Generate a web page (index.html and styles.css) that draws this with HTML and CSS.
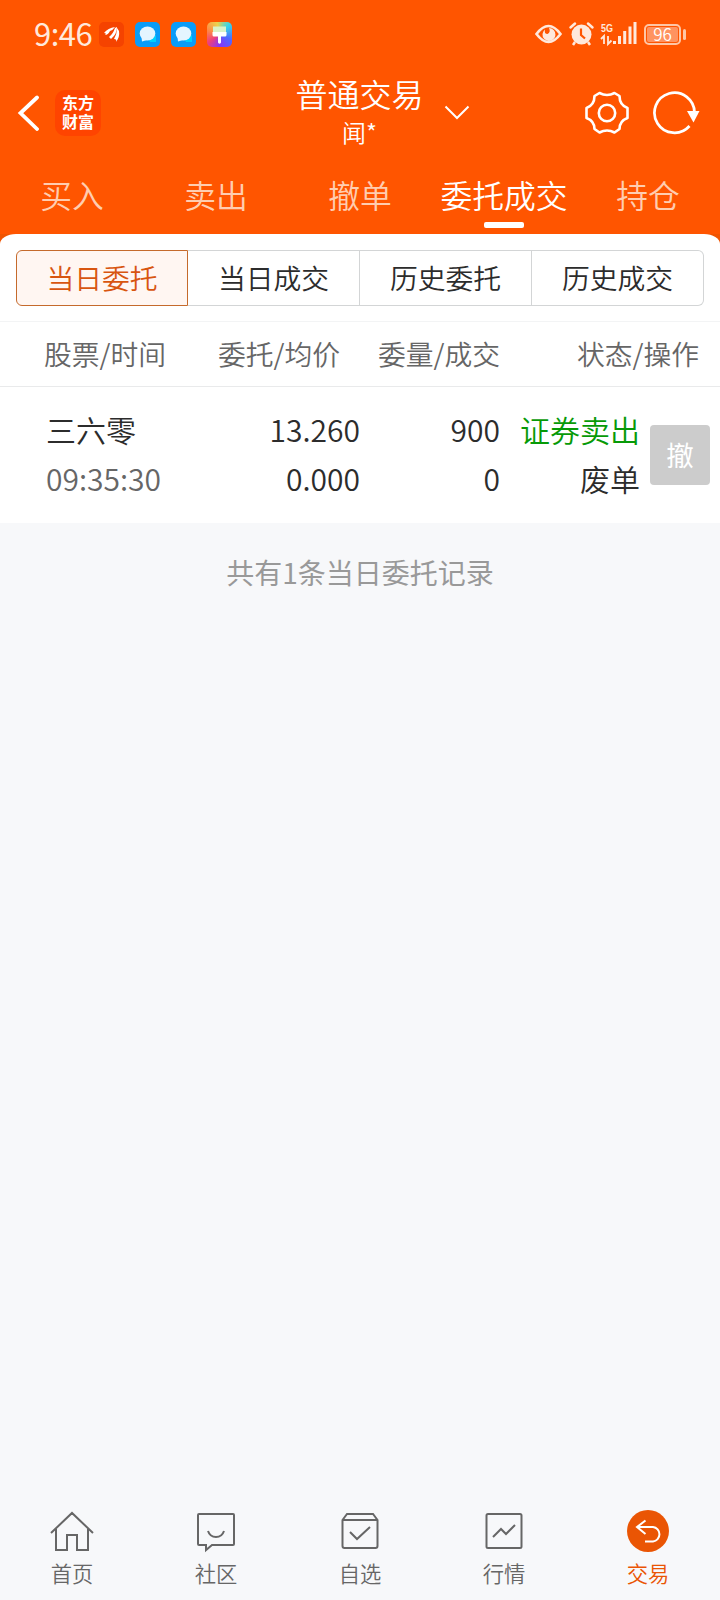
FILE: index.html
```html
<!DOCTYPE html>
<html lang="zh-CN">
<head>
  <meta charset="UTF-8">
  <meta name="viewport" content="width=device-width, initial-scale=1.0">
  <title>委托成交</title>
  <link rel="stylesheet" href="styles.css">
</head>
<body>
  <header class="top">
    <!-- 状态栏 -->
    <div class="status-bar">
      <span class="clock">9:46</span>
      <div class="notice-icons">
        <svg width="25" height="25" viewBox="0 0 25 25">
          <rect width="25" height="25" rx="5" fill="#f54300"/>
          <path d="M5 11Q9 6 16 5Q14 8 11 9Q9 13 6 13Q8 11 5 11Z" fill="#fff"/>
          <path d="M10 15Q14 12 16 6L18 5Q18 12 12 17Z" fill="#fff"/>
          <path d="M15 17Q18 12 18 6L20 9Q21 15 17 20Q18 17 15 17Z" fill="#fff"/>
        </svg>
        <svg width="25" height="25" viewBox="0 0 25 25">
          <rect width="25" height="25" rx="5" fill="#0a9cf8"/>
          <path d="M14 18L21 13V20H15Z" fill="#00d0ff"/>
          <ellipse cx="12.500" cy="11.500" rx="7.800" ry="7" fill="#e4f5ff"/>
          <path d="M6.500 15L7 19.500L12 18Z" fill="#e4f5ff"/>
        </svg>
        <svg width="25" height="25" viewBox="0 0 25 25">
          <rect width="25" height="25" rx="5" fill="#0a9cf8"/>
          <path d="M14 18L21 13V20H15Z" fill="#00d0ff"/>
          <ellipse cx="12.500" cy="11.500" rx="7.800" ry="7" fill="#e4f5ff"/>
          <path d="M6.500 15L7 19.500L12 18Z" fill="#e4f5ff"/>
        </svg>
        <div class="theme-icon">
          <svg width="25" height="25" viewBox="0 0 25 25">
            <rect x="6" y="4.500" width="13" height="6" fill="#d9f3c8"/>
            <path d="M5.500 10H19.500V13Q19.500 14.500 18 14.500H14V20.500Q12.500 23 11 20.500V14.500H7Q5.500 14.500 5.500 13Z" fill="#fff"/>
          </svg>
        </div>
      </div>
      <div class="system-icons">
        <svg width="106" height="26" viewBox="0 0 106 26" fill="#ffe9dc">
          <!-- 护眼 -->
          <path d="M1.500 13Q13.500-3 25.500 13Q13.500 29 1.500 13Z" fill="none" stroke="#ffe9dc" stroke-width="2.600"/>
          <path d="M14 7A6.500 6.500 0 1 1 7.500 13Q8 10 10 8.500Q9 13 12.500 13Q16 11 14 7Z"/>
          <!-- 闹钟 -->
          <circle cx="46.500" cy="13.500" r="10"/>
          <path d="M35.500 6.500L40 2.500M53 2.500L57.500 6.500" stroke="#ffe9dc" stroke-width="2.500" stroke-linecap="round"/>
          <path d="M40 21L38 24M53 21L55 24" stroke="#ffe9dc" stroke-width="2.500"/>
          <path d="M46 7.500V14L50 17.500" fill="none" stroke="#ff5500" stroke-width="2.200"/>
          <!-- 信号 -->
          <text class="net-type" x="66" y="11" textLength="12" lengthAdjust="spacingAndGlyphs">5G</text>
          <path d="M66 18L69 15V23M73 15V23L76.500 19.500" fill="none" stroke="#ffe9dc" stroke-width="1.800"/>
          <rect x="78" y="20" width="3" height="3"/>
          <rect x="83" y="15" width="3" height="8"/>
          <rect x="88.200" y="10" width="3" height="13"/>
          <rect x="93.500" y="5.500" width="3" height="17.500"/>
          <rect x="98.500" y="1" width="3" height="22"/>
        </svg>
        <div class="battery"><span>96</span></div>
        <i class="battery-cap"></i>
      </div>
    </div>

    <!-- 标题栏 -->
    <div class="title-bar">
      <div class="title-left">
        <svg width="22" height="36" viewBox="0 0 22 36">
          <path d="M20 2.500L3.500 18L20 34" fill="none" stroke="#fff" stroke-width="3.800" stroke-linecap="round"/>
        </svg>
        <div class="brand">东方<br>财富</div>
      </div>
      <div class="title-center">
        <div class="account">
          <h1>普通交易</h1>
          <p>闻*</p>
        </div>
        <svg class="arrow" width="26" height="15" viewBox="0 0 26 15">
          <path d="M1.500 1.500L13 13L24.500 1.500" fill="none" stroke="#fff" stroke-width="2"/>
        </svg>
      </div>
      <div class="title-right">
        <svg width="46" height="44" viewBox="0 0 46 44" fill="none" stroke="#fff" stroke-width="2.600" stroke-linejoin="round">
          <path d="M15.500 2Q23 6 30.500 2L35.500 5Q35.500 14 43.500 17V27Q35.500 30 35.500 38L30.500 41.500Q23 37.500 15.500 41.500L10.500 38Q10.500 30 2.500 27V17Q10.500 14 10.500 5Z"/>
          <circle cx="23" cy="22" r="8.200"/>
        </svg>
        <svg width="48" height="44" viewBox="0 0 48 44">
          <path d="M37.500 35A20 20 0 1 1 42.500 22" fill="none" stroke="#fff" stroke-width="2.700"/>
          <path d="M35 20H47.500L41.500 31.500Z" fill="#fff"/>
        </svg>
      </div>
    </div>

    <nav class="tabs">
      <a>买入</a>
      <a>卖出</a>
      <a>撤单</a>
      <a class="active">委托成交</a>
      <a>持仓</a>
    </nav>
  </header>

  <main>
    <section class="panel">
      <div class="segments">
        <button class="active">当日委托</button>
        <button>当日成交</button>
        <button>历史委托</button>
        <button>历史成交</button>
      </div>

      <div class="list-head">
        <span>股票/时间</span>
        <span>委托/均价</span>
        <span>委量/成交</span>
        <span>状态/操作</span>
      </div>

      <div class="order">
        <div class="cell name"><span>三六零</span><span class="time">09:35:30</span></div>
        <div class="cell"><span>13.260</span><span>0.000</span></div>
        <div class="cell"><span>900</span><span>0</span></div>
        <div class="cell"><span class="sell">证券卖出</span><span>废单</span></div>
        <button class="cancel">撤</button>
      </div>
    </section>
    <p class="total">共有1条当日委托记录</p>
  </main>

  <!-- 底部导航 -->
  <footer class="bottom-nav">
    <a>
      <svg width="46" height="44" viewBox="0 0 46 44">
        <path d="M2 23L23 3L44 23M7 19V40H18V25H28V40H39V19"/>
      </svg>
      <span>首页</span>
    </a>
    <a>
      <svg width="46" height="44" viewBox="0 0 46 44">
        <path d="M6 4H40Q41 4 41 5V34Q41 35 40 35H19L13 40V35H6Q5 35 5 34V5Q5 4 6 4Z"/>
        <path d="M15 21Q17 27 23 27Q29 27 31 21"/>
      </svg>
      <span>社区</span>
    </a>
    <a>
      <svg width="46" height="44" viewBox="0 0 46 44">
        <path d="M5.500 10L10 4H36L40.500 10V36Q40.500 38 38.500 38H7.500Q5.500 38 5.500 36ZM5.500 10H40.500"/>
        <path d="M13 22L20 29L33 17"/>
      </svg>
      <span>自选</span>
    </a>
    <a>
      <svg width="46" height="44" viewBox="0 0 46 44">
        <rect x="5.500" y="4" width="35" height="34" rx="1.500"/>
        <path d="M12 27L20 19L25 24L34 15"/>
      </svg>
      <span>行情</span>
    </a>
    <a class="active">
      <svg width="46" height="44" viewBox="0 0 46 44">
        <circle cx="23" cy="21" r="21"/>
        <path d="M20.500 10.500L12 17L20.500 24M12 17H28A7.300 7.300 0 0 1 28 31.500H20"/>
      </svg>
      <span>交易</span>
    </a>
  </footer>
</body>
</html>
```

FILE: styles.css
```css
* {
  box-sizing: border-box;
}
body {
  margin: 0;
  height: 1600px;
  display: flex;
  flex-direction: column;
  background: #f7f8fa;
  color: #2c2c2c;
  font-family: "Noto Sans CJK SC", sans-serif;
  font-weight: 350;
}
h1, p {
  margin: 0;
  font-weight: inherit;
}
svg {
  display: block;
}
button {
  font: inherit;
  color: inherit;
  padding: 0;
}

/* 顶部 */
.top {
  height: 234px;
  background: #ff5500;
  color: #fff;
}
.status-bar {
  height: 68px;
  padding: 0 35px 0 34px;
  display: flex;
  align-items: center;
}
.clock {
  width: 65px;
  padding-bottom: 2px;
  font-size: 31px;
  line-height: 40px;
  font-weight: 400;
  color: #ffe9dc;
  letter-spacing: -0.5px;
}
.notice-icons {
  display: flex;
  gap: 11px;
}
.theme-icon {
  border-radius: 5px;
  background: conic-gradient(from 45deg, #35d5e8, #4d69ff, #8a35f5 135deg, #f0407a 190deg, #ff8a45, #ecd34c, #35d5e8);
}
.system-icons {
  margin-left: auto;
  display: flex;
  align-items: center;
}
.net-type {
  font: bold 11px "Liberation Sans", sans-serif;
}
.battery {
  margin-left: 3px;
  width: 37px;
  height: 21px;
  padding: 1px;
  border: 2px solid #ffc6a5;
  border-radius: 5px;
}
.battery span {
  display: block;
  height: 15px;
  border-radius: 2px;
  background: #ff9360;
  font-size: 17px;
  line-height: 13px;
  text-align: center;
}
.battery-cap {
  width: 3px;
  height: 11px;
  margin-left: 2px;
  margin-right: -1px;
  border-radius: 2px;
  background: #ffc6a5;
}
.title-bar {
  height: 90px;
  padding: 0 20px 0 17px;
  display: grid;
  grid-template-columns: 1fr auto 1fr;
  align-items: center;
}
.title-left {
  display: flex;
  align-items: center;
  gap: 16px;
}
.brand {
  width: 46px;
  height: 46px;
  border-radius: 10px;
  background: #ff4400;
  font-size: 16px;
  font-weight: 700;
  line-height: 19px;
  padding-top: 3px;
  text-align: center;
}
.title-center {
  display: flex;
  align-items: center;
}
.account {
  text-align: center;
  margin-left: 48px;
  padding-bottom: 1px;
}
.account h1 {
  font-size: 32px;
  line-height: 38px;
}
.account p {
  font-size: 24px;
  line-height: 40px;
}
.arrow {
  margin-left: 20px;
  margin-top: -2px;
}
.title-right {
  display: flex;
  justify-content: flex-end;
  gap: 22px;
}
.tabs {
  height: 76px;
  display: flex;
}
.tabs a {
  flex: 1;
  display: flex;
  flex-direction: column;
  align-items: center;
  font-size: 31.800px;
  line-height: 46px;
  padding-top: 13px;
  white-space: nowrap;
  color: #ffcdb0;
}
.tabs .active {
  color: #fff;
}
.tabs .active::after {
  content: "";
  width: 40px;
  height: 6px;
  margin-top: 5px;
  border-radius: 2px;
  background: #fff;
}

/* 委托列表 */
main {
  flex: 1;
  background: linear-gradient(#f05400 10px, transparent 10px);
}
.panel {
  background: #fff;
  border-radius: 16px 16px 0 0 / 10px 10px 0 0;
  padding-top: 16px;
}
.segments {
  display: flex;
  margin: 0 16px 15px;
}
.segments button {
  width: 172px;
  height: 56px;
  padding-bottom: 2px;
  background: #fff;
  border: 1px solid #d3d5d6;
  font-size: 27.800px;
}
.segments button + button {
  border-left-width: 0;
}
.segments button:first-child {
  border-radius: 6px 0 0 6px;
}
.segments button:last-child {
  border-radius: 0 6px 6px 0;
}
.segments .active {
  color: #d85510;
  background: #fff6f2;
  border-color: #c56a2c;
}
.list-head {
  display: grid;
  grid-template-columns: 174px 166px 160px 1fr;
  height: 66px;
  padding: 0 21px 3px 0;
  align-items: center;
  text-align: right;
  border-top: 1px solid #f3f4f5;
  border-bottom: 1px solid #e9eaeb;
  font-size: 27.800px;
  color: #666;
}
.list-head span:first-child {
  padding-left: 44px;
  text-align: left;
  white-space: nowrap;
}
.order {
  display: grid;
  grid-template-columns: 134px 180px 140px 140px 60px;
  padding: 0 10px 0 46px;
  height: 136px;
  align-items: center;
  font-size: 30px;
}
.cell {
  display: flex;
  flex-direction: column;
  padding-bottom: 2px;
  text-align: right;
  line-height: 49px;
  white-space: nowrap;
}
.name {
  text-align: left;
}
.time {
  color: #666;
}
.sell {
  color: #079a07;
}
.cancel {
  width: 60px;
  height: 60px;
  margin-left: 10px;
  padding-bottom: 2px;
  border: 0;
  border-radius: 4px;
  background: #ccc;
  color: #fff;
  font-size: 27.500px;
  font-weight: 400;
}
.total {
  margin-top: 27px;
  text-align: center;
  font-size: 28px;
  font-weight: 400;
  line-height: 44px;
  color: #999;
}

/* 底部导航 */
.bottom-nav {
  display: flex;
  height: 90px;
}
.bottom-nav a {
  flex: 1;
  display: flex;
  flex-direction: column;
  align-items: center;
  font-size: 21.300px;
  line-height: 38px;
  color: #666;
}
.bottom-nav svg {
  fill: none;
  stroke: #666;
  stroke-width: 2;
}
.bottom-nav .active {
  color: #ea5504;
}
.bottom-nav .active circle {
  fill: #ea5504;
  stroke: none;
}
.bottom-nav .active path {
  stroke: #fff;
}
```
